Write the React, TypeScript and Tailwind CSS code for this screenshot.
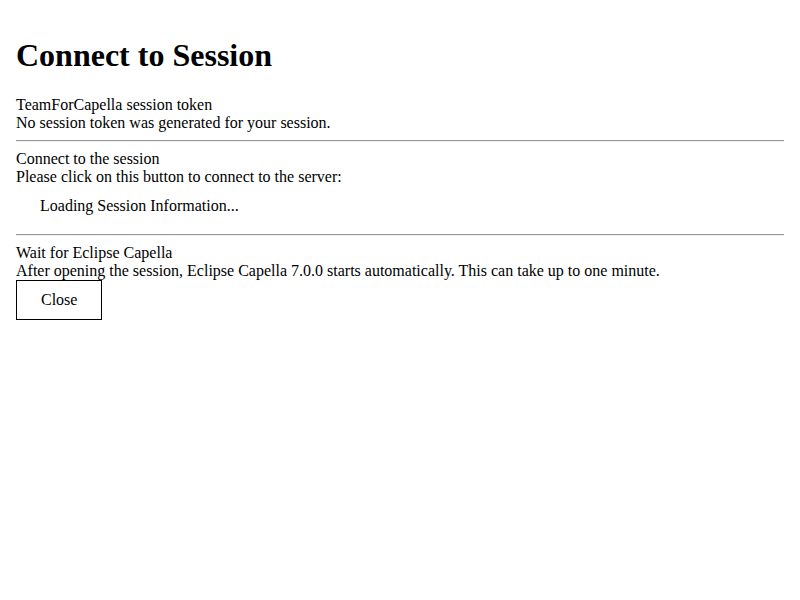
import React from "react";

const Divider = () => (
  <hr className="my-2 border-t border-b border-t-[#9a9a9a] border-b-[#eeeeee]" />
);

export default function App() {
  return (
    <div className="min-h-[600px] bg-white p-4 text-black font-['Liberation_Serif',_'Times_New_Roman',_serif] text-base leading-[18px]">
      <h1 className="mt-[21px] mb-[22px] text-[32px] font-bold leading-[37px]">
        Connect to Session
      </h1>

      <section>
        <div>TeamForCapella session token</div>
        <div>No session token was generated for your session.</div>
      </section>

      <Divider />

      <section>
        <div>Connect to the session</div>
        <div>Please click on this button to connect to the server:</div>
        <div className="pl-6 pt-[11px] pb-[11px]">
          Loading Session Information...
        </div>
      </section>

      <Divider />

      <section>
        <div>Wait for Eclipse Capella</div>
        <div>
          After opening the session, Eclipse Capella 7.0.0 starts automatically.
          This can take up to one minute.
        </div>
        <button className="border border-black bg-white px-6 py-[10px] leading-[18px]">
          Close
        </button>
      </section>
    </div>
  );
}
